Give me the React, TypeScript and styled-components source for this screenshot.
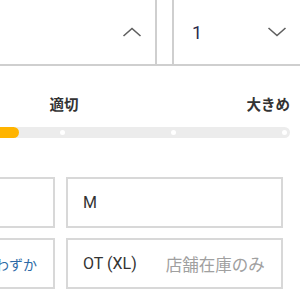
import React from "react";
import styled, { createGlobalStyle } from "styled-components";

const Global = createGlobalStyle`
  html, body { margin: 0; padding: 0; background: #ffffff; }
  body { font-family: "Roboto", "Noto Sans CJK JP", sans-serif; }
`;

const Page = styled.div`
  width: 300px;
  height: 300px;
  overflow: hidden;
  background: #fff;
`;

const SelectRow = styled.div`
  display: flex;
  gap: 15px;
  margin-left: -100px;
  margin-top: -20px;
  height: 86px;
  box-sizing: border-box;
  border-bottom: 2px solid #cfcfcf;
`;

const SelectBox = styled.div<{ $w: number }>`
  width: ${(p) => p.$w}px;
  flex: none;
  box-sizing: border-box;
  border: 2px solid #cfcfcf;
  border-bottom: none;
  display: flex;
  align-items: center;
  padding: 18px 13px 0 18px;
  gap: 8px;
`;

const Value = styled.span`
  flex: 1;
  font-family: "Roboto", sans-serif;
  font-size: 18px;
  color: #2a2a4a;
`;

const Chevron = styled.svg`
  width: 20px;
  height: 10px;
  flex: none;
`;

const LabelRow = styled.div`
  display: grid;
  grid-template-columns: 95px 58px 1fr;
  margin-left: -60px;
  width: 350px;
  margin-top: 30px;
  height: 16px;
`;

const Label = styled.span<{ $align: string }>`
  font-family: "Noto Sans CJK JP", sans-serif;
  font-size: 14.5px;
  font-weight: 700;
  line-height: 16px;
  color: #333;
  text-align: ${(p) => p.$align};
`;

const Track = styled.div`
  position: relative;
  margin-left: -60px;
  width: 350px;
  margin-top: 15px;
  height: 11px;
  border-radius: 6px;
  background: #ececec;
  display: flex;
  align-items: center;
  justify-content: flex-end;
  gap: 106px;
  padding-right: 3px;
  box-sizing: border-box;
`;

const Fill = styled.div`
  position: absolute;
  left: 0;
  top: 0;
  bottom: 0;
  width: 79px;
  border-radius: 6px;
  background: #ffb400;
`;

const Dot = styled.span`
  width: 5px;
  height: 5px;
  border-radius: 50%;
  background: #fff;
  flex: none;
`;

const OptionGrid = styled.div`
  display: grid;
  grid-template-columns: 115px 217px;
  grid-auto-rows: 51px;
  column-gap: 11px;
  row-gap: 10px;
  margin-left: -60px;
  margin-top: 39px;
`;

const Option = styled.div<{ $end?: boolean }>`
  box-sizing: border-box;
  border: 2px solid #d8d8d8;
  display: flex;
  align-items: center;
  justify-content: ${(p) => (p.$end ? "flex-end" : "flex-start")};
  padding: 0 16px 0 15px;
  gap: 29px;
  white-space: nowrap;
  overflow: hidden;
`;

const Size = styled.span`
  font-family: "Roboto", sans-serif;
  font-size: 16px;
  color: #333;
`;

const Stock = styled.span<{ $tone: "low" | "store" }>`
  font-family: "Noto Sans CJK JP", sans-serif;
  font-size: ${(p) => (p.$tone === "low" ? "14px" : "16.5px")};
  color: ${(p) => (p.$tone === "low" ? "#2d6aa6" : "#a0a0a0")};
  flex: none;
`;

const Up = () => (
  <Chevron viewBox="0 0 20 10">
    <path d="M1.5 9L10 1.5L18.5 9" fill="none" stroke="#5f5f5f" strokeWidth="1.6" />
  </Chevron>
);

const Down = () => (
  <Chevron viewBox="0 0 20 10">
    <path d="M1.5 1L10 8.5L18.5 1" fill="none" stroke="#5f5f5f" strokeWidth="1.6" />
  </Chevron>
);

export default function App() {
  return (
    <Page>
      <Global />
      <SelectRow>
        <SelectBox $w={257}>
          <Value />
          <Up />
        </SelectBox>
        <SelectBox $w={130}>
          <Value>1</Value>
          <Down />
        </SelectBox>
      </SelectRow>
      <LabelRow>
        <span />
        <Label $align="center">適切</Label>
        <Label $align="right">大きめ</Label>
      </LabelRow>
      <Track>
        <Fill />
        <Dot />
        <Dot />
        <Dot />
      </Track>
      <OptionGrid>
        <Option />
        <Option>
          <Size>M</Size>
        </Option>
        <Option $end>
          <Stock $tone="low">残りわずか</Stock>
        </Option>
        <Option>
          <Size>OT (XL)</Size>
          <Stock $tone="store">店舗在庫のみ</Stock>
        </Option>
      </OptionGrid>
    </Page>
  );
}
